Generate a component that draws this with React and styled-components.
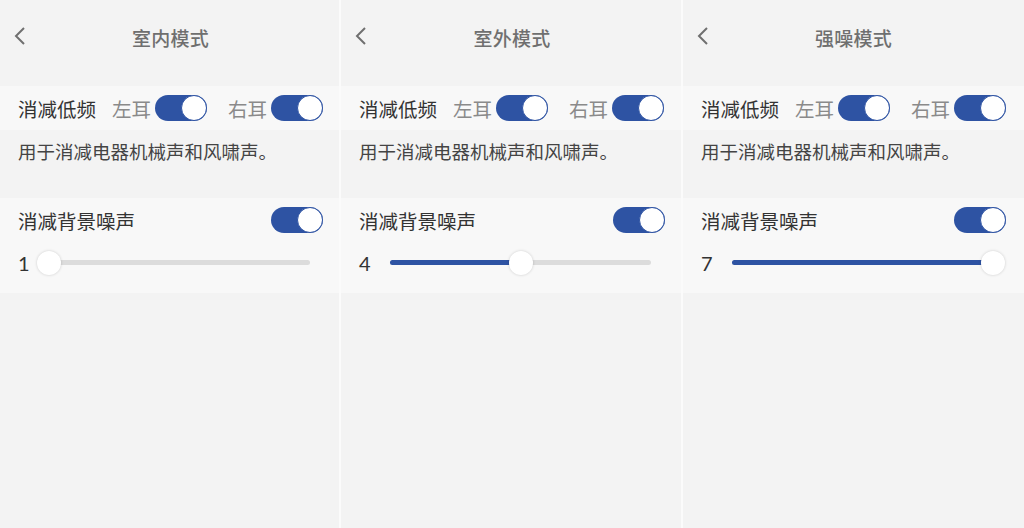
import React from "react";
import styled, { createGlobalStyle } from "styled-components";

const GlobalStyle = createGlobalStyle`
  *, *::before, *::after {
    box-sizing: border-box;
  }
  body {
    margin: 0;
    background: #f3f3f3;
    font-family: "Noto Sans CJK SC", "Noto Sans", sans-serif;
  }
`;

const BLUE = "#2e53a3";

const Screen = styled.div`
  width: 1024px;
  height: 528px;
  display: grid;
  grid-template-columns: 341px 342px 341px;
  background: #f3f3f3;
  overflow: hidden;
`;

const Panel = styled.div`
  display: flex;
  flex-direction: column;
  border-left: ${(p) => (p.$first ? "none" : "2px solid #fbfbfb")};
  margin-left: ${(p) => (p.$first ? "0" : "-2px")};
`;

const Header = styled.div`
  height: 86px;
  display: flex;
  align-items: center;
  padding-bottom: 12px;
  position: relative;
`;

const Back = styled.button`
  position: absolute;
  left: 10px;
  top: 24px;
  width: 20px;
  height: 24px;
  border: none;
  background: none;
  padding: 0;
  display: flex;
  align-items: center;
  justify-content: center;
`;

const Title = styled.div`
  flex: 1;
  text-align: center;
  font-size: 19px;
  font-weight: 500;
  color: #6f6f6f;
  letter-spacing: 0.2px;
`;

const Band = styled.div`
  background: #f8f8f8;
  padding: 0 18px;
`;

const Row = styled.div`
  height: ${(p) => p.$h || 44}px;
  display: flex;
  align-items: center;
  white-space: nowrap;
`;

const Label = styled.span`
  font-size: 19.5px;
  color: #333;
  flex: ${(p) => (p.$grow ? 1 : "none")};
`;

const Ear = styled.span`
  font-size: 19.5px;
  color: #8a8a8a;
  margin-left: ${(p) => p.$ml || 0}px;
  margin-right: 4px;
  flex: none;
`;

const Desc = styled.div`
  height: 68px;
  padding: 8px 18px 0;
  font-size: 18.5px;
  color: #444;
  white-space: nowrap;
`;

const Switch = styled.div`
  width: 52px;
  height: 26px;
  border-radius: 13px;
  background: ${BLUE};
  position: relative;
  flex: none;
`;

const Knob = styled.div`
  position: absolute;
  right: 0;
  top: 0;
  width: 26px;
  height: 26px;
  border-radius: 50%;
  background: #fff;
  border: 1.5px solid ${BLUE};
`;

const SliderRow = styled.div`
  height: 51px;
  display: flex;
  align-items: center;
  padding-bottom: 10px;
`;

const Value = styled.span`
  width: 31px;
  font-size: 20px;
  color: #333;
  font-family: "Lato", "Noto Sans", sans-serif;
`;

const Track = styled.div`
  position: relative;
  width: 261px;
  height: 5px;
  border-radius: 3px;
  background: #dcdcdc;
`;

const Fill = styled.div`
  position: absolute;
  left: 0;
  top: 0;
  bottom: 0;
  border-radius: 3px;
  background: ${BLUE};
`;

const Thumb = styled.div`
  position: absolute;
  top: 50%;
  width: 24px;
  height: 24px;
  margin: -12px 0 0 -12px;
  border-radius: 50%;
  background: #fff;
  box-shadow: 0 0 3px rgba(0, 0, 0, 0.18);
`;

const Toggle = () => (
  <Switch>
    <Knob />
  </Switch>
);

const Chevron = () => (
  <svg width="12" height="20" viewBox="0 0 12 20">
    <path d="M10 2 L2 10 L10 18" fill="none" stroke="#6f6f6f" strokeWidth="2" />
  </svg>
);

const Slider = ({ value }) => {
  const pct = ((value - 1) / 6) * 100;
  return (
    <SliderRow>
      <Value>{value}</Value>
      <Track>
        <Fill style={{ width: `${pct}%` }} />
        <Thumb style={{ left: `${pct}%` }} />
      </Track>
    </SliderRow>
  );
};

const modes = [
  { title: "室内模式", level: 1 },
  { title: "室外模式", level: 4 },
  { title: "强噪模式", level: 7 },
];

const ModePanel = ({ title, level, first }) => (
  <Panel $first={first}>
    <Header>
      <Back>
        <Chevron />
      </Back>
      <Title>{title}</Title>
    </Header>
    <Band>
      <Row>
        <Label>消减低频</Label>
        <Ear $ml={16}>左耳</Ear>
        <Toggle />
        <Ear $ml={21}>右耳</Ear>
        <Toggle />
      </Row>
    </Band>
    <Desc>用于消减电器机械声和风啸声。</Desc>
    <Band>
      <Row $h={44}>
        <Label $grow>消减背景噪声</Label>
        <Toggle />
      </Row>
      <Slider value={level} />
    </Band>
  </Panel>
);

export default function App() {
  return (
    <>
      <GlobalStyle />
      <Screen>
        {modes.map((m, i) => (
          <ModePanel key={m.title} {...m} first={i === 0} />
        ))}
      </Screen>
    </>
  );
}
